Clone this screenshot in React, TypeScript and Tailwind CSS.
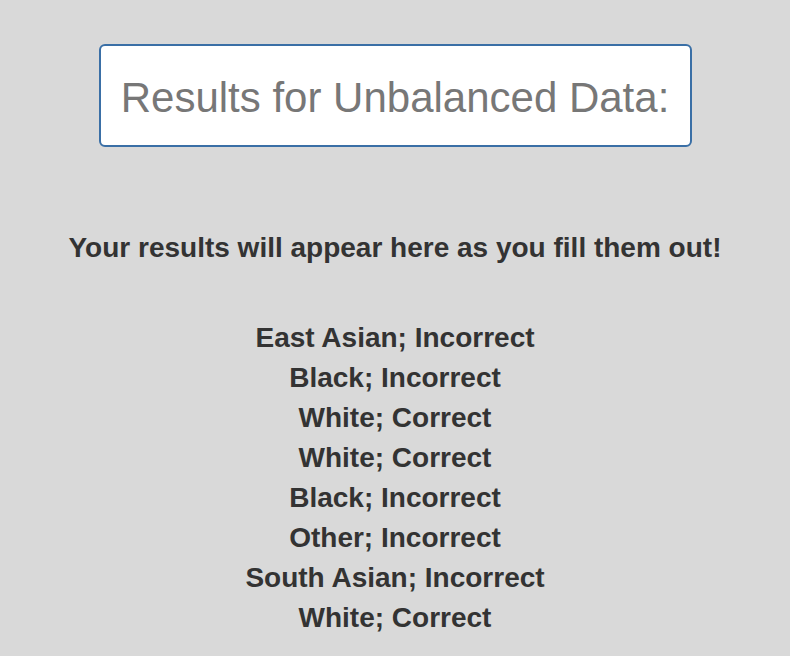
const RESULTS = [
  "East Asian; Incorrect",
  "Black; Incorrect",
  "White; Correct",
  "White; Correct",
  "Black; Incorrect",
  "Other; Incorrect",
  "South Asian; Incorrect",
  "White; Correct",
];

export default function App() {
  return (
    <div className="min-h-[656px] bg-[#d9d9d9] pt-[44px] font-['Liberation_Sans',Arial,sans-serif]">
      <div className="mx-auto flex h-[103px] w-[593px] items-center justify-center rounded-[6px] border-2 border-[#3a6fa6] bg-white pt-[3px] text-[42px] text-[#777777]">
        Results for Unbalanced Data:
      </div>

      <h2 className="mt-[81px] text-center text-[28px] font-bold leading-[40px] text-[#333333]">
        Your results will appear here as you fill them out!
      </h2>

      <ul className="mt-[50px] text-center text-[28px] font-bold leading-[40px] text-[#333333]">
        {RESULTS.map((r, i) => (
          <li key={i}>{r}</li>
        ))}
      </ul>
    </div>
  );
}
